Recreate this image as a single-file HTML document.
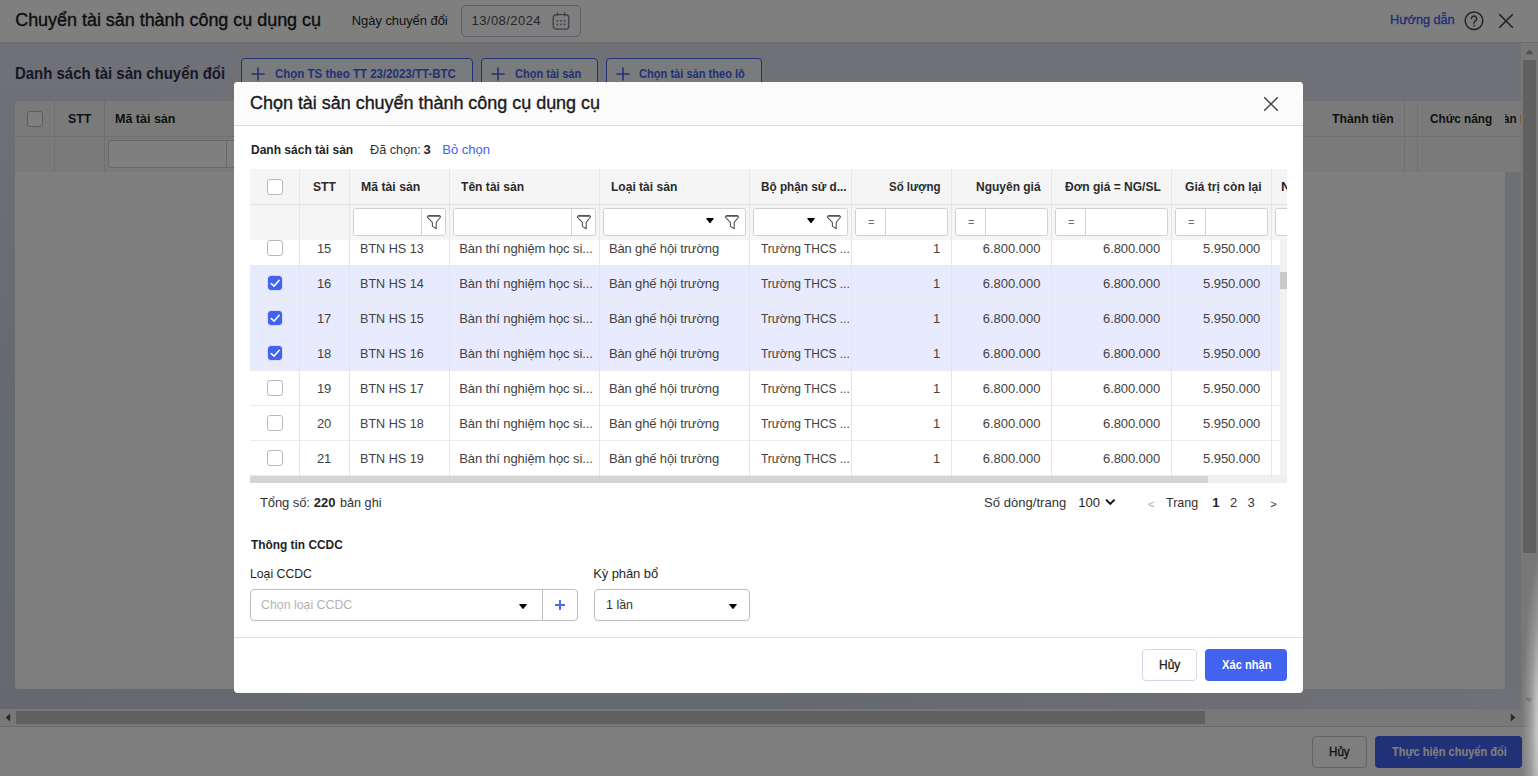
<!DOCTYPE html>
<html lang="vi">
<head>
<meta charset="utf-8">
<title>Chuyển tài sản thành công cụ dụng cụ</title>
<style>
*{box-sizing:border-box;margin:0;padding:0}
html,body{width:1538px;height:776px;overflow:hidden}
body{font-family:"Liberation Sans",sans-serif;font-size:13px;color:#1f1f1f;background:#e0e2ec radial-gradient(ellipse 1500px 700px at 0% 100%,#cad1df 0%,#ccd3e1 55%,#e0e2ec 100%);position:relative}
.L{position:absolute;left:0;top:0;width:1538px;height:776px;overflow:hidden}
.t{position:absolute;white-space:nowrap;transform-origin:0 0;line-height:20px;height:20px;font-size:13px;color:#1f1f1f}
.b{font-weight:bold}
.sk{-webkit-text-stroke:.35px currentColor}
.a{position:absolute}
.vl{position:absolute;width:1px;background:#e6e6e6}
.hl{position:absolute;height:1px;background:#e2e2e2}
.cb{position:absolute;width:16px;height:16px;border:1px solid #b9b9b9;border-radius:3px;background:#fff}
.cb.on{border:1px solid #d5d9f3;background:#4262f0;background-clip:padding-box;border-radius:3.5px}
.cb svg{position:absolute;left:-1px;top:-1px}
.fi{position:absolute;top:208px;height:28px;border:1px solid #d0d0d0;border-radius:2.5px;background:#fff}
.fi i{position:absolute;top:0;width:1px;height:26px;background:#d3d3d3}
.btn{position:absolute;height:32px;border-radius:4px}
.row{position:absolute;left:250px;width:1030px;height:35px;border-bottom:1px solid #ebebeb;background:#fff}
.row.sel{background:#e8ebfd}
svg{display:block}
</style>
</head>
<body>
<!-- ================= underlying page ================= -->
<div class="L" id="page">
  <div class="a" style="left:0;top:0;width:1538px;height:43px;background:#fff;border-bottom:1px solid #d4d4d4"></div>
  <div class="a" style="left:461px;top:5px;width:120px;height:32px;border:1px solid #bcbcc6;border-radius:5px"></div>
  <svg class="a" style="left:551px;top:12px" width="20" height="20" viewBox="0 0 20 20" fill="none" stroke="#767a9a" stroke-width="1.3"><rect x="2.2" y="2.6" width="15.6" height="14.6" rx="3.2"/><path d="M6.3 1v2.6M13.7 1v2.6" stroke-linecap="round"/><g fill="#767a9a" stroke="none"><rect x="5.6" y="8" width="1.6" height="1.6"/><rect x="9.2" y="8" width="1.6" height="1.6"/><rect x="12.8" y="8" width="1.6" height="1.6"/><rect x="5.6" y="11.6" width="1.6" height="1.6"/><rect x="9.2" y="11.6" width="1.6" height="1.6"/><rect x="12.8" y="11.6" width="1.6" height="1.6"/></g></svg>
  <svg class="a" style="left:1463px;top:10px" width="22" height="22" viewBox="0 0 22 22" fill="none" stroke="#454545" stroke-width="1.5"><circle cx="11" cy="10.8" r="8.8"/><path d="M8.4 8.6a2.6 2.6 0 1 1 3.9 2.3c-.8.5-1.3.9-1.3 1.9v.4" stroke-linecap="round"/><circle cx="11" cy="15.6" r=".9" fill="#454545" stroke="none"/></svg>
  <svg class="a" style="left:1498px;top:13px" width="16" height="16" viewBox="0 0 16 16" fill="none" stroke="#454545" stroke-width="1.6"><path d="M1.2 1.2l13.6 13.6M14.8 1.2L1.2 14.8"/></svg>

  <!-- toolbar buttons -->
  <div class="btn" style="left:241px;top:58px;width:232px;border:1px solid #4262f0;background:#f5f6f9"></div>
  <div class="btn" style="left:481px;top:58px;width:117px;border:1px solid #4262f0;background:#f5f6f9"></div>
  <div class="btn" style="left:606px;top:58px;width:156px;border:1px solid #4262f0;background:#f5f6f9"></div>
  <svg class="a" style="left:251px;top:67px" width="14" height="14" viewBox="0 0 14 14" stroke="#4262f0" stroke-width="1.6"><path d="M7 .4v13.2M.4 7h13.2"/></svg>
  <svg class="a" style="left:491px;top:67px" width="14" height="14" viewBox="0 0 14 14" stroke="#4262f0" stroke-width="1.6"><path d="M7 .4v13.2M.4 7h13.2"/></svg>
  <svg class="a" style="left:616px;top:67px" width="14" height="14" viewBox="0 0 14 14" stroke="#4262f0" stroke-width="1.6"><path d="M7 .4v13.2M.4 7h13.2"/></svg>

  <!-- grid -->
  <div class="a" style="left:15px;top:101px;width:1490px;height:588px;background:#fff;border-radius:4px"></div>
  <div class="a" style="left:15px;top:101px;width:1506px;height:71px;background:#f5f5f5;border-radius:4px 0 0 0"></div>
  <div class="a" style="left:1505px;top:172px;width:16px;height:517px;background:#dfe1ea"></div>
  <div class="hl" style="left:15px;top:136px;width:1506px;background:#e0e0e0"></div>
  <div class="vl" style="left:54px;top:101px;height:71px;background:#e0e0e0"></div>
  <div class="vl" style="left:104px;top:101px;height:71px;background:#e0e0e0"></div>
  <div class="vl" style="left:1404px;top:101px;height:71px;background:#e0e0e0"></div>
  <div class="vl" style="left:1417px;top:101px;height:71px;background:#e0e0e0"></div>
  <div class="cb" style="left:27px;top:111px"></div>
  <div class="a" style="left:108px;top:140px;width:142px;height:28px;border:1px solid #cfcfcf;border-radius:3px;background:#fff"></div>
  <div class="vl" style="left:226px;top:141px;height:26px;background:#cfcfcf"></div>
  <div class="a" style="left:1505px;top:112px;width:16px;height:20px;overflow:hidden"><span class="t b" style="left:-2px;top:-3px;transform:scaleX(.9)">àn <span style="color:#a11">lý</span></span></div>

  <!-- scrollbars -->
  <div class="a" style="left:1521px;top:43px;width:17px;height:683px;background:#f1f1f1"></div>
  <div class="a" style="left:1523px;top:60px;width:13px;height:493px;background:#c1c1c1"></div>
  <svg class="a" style="left:1525px;top:49px" width="9" height="6" viewBox="0 0 9 6"><path d="M4.5 .6L8.6 5.2H.4z" fill="#a0a0a0"/></svg>
  <svg class="a" style="left:1525px;top:697px" width="9" height="6" viewBox="0 0 9 6"><path d="M4.5 5.4L8.6 .8H.4z" fill="#a0a0a0"/></svg>
  <div class="a" style="left:0;top:709px;width:1521px;height:17px;background:#f1f1f1"></div>
  <div class="a" style="left:16px;top:711px;width:1189px;height:13px;background:#c1c1c1"></div>
  <svg class="a" style="left:5px;top:713px" width="6" height="9" viewBox="0 0 6 9"><path d="M.6 4.5L5.2 .4v8.2z" fill="#505050"/></svg>
  <svg class="a" style="left:1510px;top:713px" width="6" height="9" viewBox="0 0 6 9"><path d="M5.4 4.5L.8 .4v8.2z" fill="#505050"/></svg>

  <!-- footer -->
  <div class="a" style="left:0;top:726px;width:1538px;height:50px;background:#fff;border-top:1px solid #d6d6d6"></div>
  <div class="btn" style="left:1312px;top:736px;width:55px;border:1px solid #c8c8d0;background:#fff"></div>
  <div class="btn" style="left:1375px;top:736px;width:147px;background:#4262f0"></div>
<span class="t sk" style="left:15.20px;top:10px;font-size:18px;letter-spacing:-0.040px;color:#1a1a1a;">Chuyển tài sản thành công cụ dụng cụ</span>
<span class="t" style="left:351.80px;top:11px;letter-spacing:-0.068px;color:#1f1f1f;">Ngày chuyển đổi</span>
<span class="t" style="left:471.50px;top:11px;letter-spacing:0.441px;color:#4c4c4c;">13/08/2024</span>
<span class="t sk" style="left:1389.63px;top:10px;transform:scaleX(0.9732);color:#3f5ef0;">Hướng dẫn</span>
<span class="t b" style="left:15.27px;top:63.5px;font-size:16px;transform:scaleX(0.9342);color:#2a2f4c;">Danh sách tài sản chuyển đổi</span>
<span class="t b" style="left:275.00px;top:64px;transform:scaleX(0.8843);color:#4262f0;">Chọn TS theo TT 23/2023/TT-BTC</span>
<span class="t b" style="left:514.60px;top:64px;transform:scaleX(0.8480);color:#4262f0;">Chọn tài sản</span>
<span class="t b" style="left:639.40px;top:64px;transform:scaleX(0.8521);color:#4262f0;">Chọn tài sản theo lô</span>
<span class="t b" style="left:68.00px;top:109px;transform:scaleX(0.9426);color:#1f1f1f;">STT</span>
<span class="t b" style="left:115.30px;top:109px;transform:scaleX(0.9616);color:#1f1f1f;">Mã tài sản</span>
<span class="t b" style="left:1331.50px;top:109px;transform:scaleX(0.9395);color:#1f1f1f;">Thành tiền</span>
<span class="t b" style="left:1429.90px;top:109px;transform:scaleX(0.9054);color:#1f1f1f;">Chức năng</span>
<span class="t sk" style="left:1328.61px;top:742px;transform:scaleX(0.8931);color:#1f1f1f;">Hủy</span>
<span class="t b" style="left:1391.90px;top:742px;transform:scaleX(0.8507);color:#ffffff;">Thực hiện chuyển đổi</span>
</div>

<!-- ================= dim overlay ================= -->
<div class="L" id="ov" style="background:rgba(0,0,0,.5)"></div>

<div class="a" style="left:1510px;top:540px;width:28px;height:236px;background:radial-gradient(ellipse 24px 190px at 36px 190px,rgba(215,215,215,1) 0%,rgba(200,200,200,.9) 40%,rgba(178,178,178,.5) 68%,rgba(150,150,150,0) 100%)"></div>
<!-- ================= modal ================= -->
<div class="L" id="modal">
  <div class="a" style="left:234px;top:82px;width:1069px;height:611px;background:#fff;border-radius:4px"></div>
  <div class="a" style="left:234px;top:82px;width:1069px;height:43px;background:#fbfbfc;border-radius:4px 4px 0 0"></div>
  <div class="hl" style="left:234px;top:125px;width:1069px;background:#dcdcdc"></div>
  <svg class="a" style="left:1263px;top:96px" width="16" height="16" viewBox="0 0 16 16" fill="none" stroke="#444" stroke-width="1.45"><path d="M1.2 1.2l13.6 13.6M14.8 1.2L1.2 14.8"/></svg>

  <!-- grid header + filter -->
  <div class="a" style="left:250px;top:169px;width:1037px;height:71px;background:#f5f5f5"></div>
  <div class="hl" style="left:250px;top:204px;width:1037px;background:#e0e0e0"></div>
  <div class="cb" style="left:267px;top:179px"></div>
  <div class="a" style="left:1272px;top:177px;width:15px;height:20px;overflow:hidden"><span class="t b" style="left:9px;top:0">Ngày ghi tăng</span></div>

  <!-- filter inputs -->
  <div class="fi" style="left:353px;width:93px"><i style="left:67px"></i></div>
  <div class="fi" style="left:453px;width:143px"><i style="left:117px"></i></div>
  <div class="fi" style="left:603px;width:143px"></div>
  <div class="fi" style="left:753px;width:95px"></div>
  <div class="fi" style="left:855px;width:93px"><i style="left:29px"></i></div>
  <div class="fi" style="left:955px;width:93px"><i style="left:29px"></i></div>
  <div class="fi" style="left:1055px;width:113px"><i style="left:29px"></i></div>
  <div class="fi" style="left:1175px;width:93px"><i style="left:29px"></i></div>
  <div class="a" style="left:1275px;top:208px;width:12px;height:28px;overflow:hidden"><div class="fi" style="left:0;top:0;width:93px"></div></div>
  <svg class="a" style="left:426px;top:214px" width="16" height="16" viewBox="0 0 16 16" fill="none" stroke="#555" stroke-width="1.1" stroke-linejoin="round"><path d="M2.4 1.6H13.6L14.6 3 10.2 8.3V14.8L6.4 12.4V8.3L1.3 3.1z"/><path d="M2.4 2.3H13.8" stroke-width=".9"/></svg>
  <svg class="a" style="left:576px;top:214px" width="16" height="16" viewBox="0 0 16 16" fill="none" stroke="#555" stroke-width="1.1" stroke-linejoin="round"><path d="M2.4 1.6H13.6L14.6 3 10.2 8.3V14.8L6.4 12.4V8.3L1.3 3.1z"/><path d="M2.4 2.3H13.8" stroke-width=".9"/></svg>
  <svg class="a" style="left:724px;top:214px" width="16" height="16" viewBox="0 0 16 16" fill="none" stroke="#555" stroke-width="1.1" stroke-linejoin="round"><path d="M2.4 1.6H13.6L14.6 3 10.2 8.3V14.8L6.4 12.4V8.3L1.3 3.1z"/><path d="M2.4 2.3H13.8" stroke-width=".9"/></svg>
  <svg class="a" style="left:826px;top:214px" width="16" height="16" viewBox="0 0 16 16" fill="none" stroke="#555" stroke-width="1.1" stroke-linejoin="round"><path d="M2.4 1.6H13.6L14.6 3 10.2 8.3V14.8L6.4 12.4V8.3L1.3 3.1z"/><path d="M2.4 2.3H13.8" stroke-width=".9"/></svg>
  <svg class="a" style="left:705.7px;top:218px" width="8" height="6" viewBox="0 0 8 6"><path d="M.9 0h6.2a.6.6 0 0 1 .45 1.05L4.4 4.95a.55.55 0 0 1-.8 0L.45 1.05A.6.6 0 0 1 .9 0z" fill="#000"/></svg>
  <svg class="a" style="left:807.4px;top:218px" width="8" height="6" viewBox="0 0 8 6"><path d="M.9 0h6.2a.6.6 0 0 1 .45 1.05L4.4 4.95a.55.55 0 0 1-.8 0L.45 1.05A.6.6 0 0 1 .9 0z" fill="#000"/></svg>
  <span class="t" style="left:867.9px;top:211.5px;color:#6e6e6e;font-size:11px">=</span>
  <span class="t" style="left:967.9px;top:211.5px;color:#6e6e6e;font-size:11px">=</span>
  <span class="t" style="left:1067.9px;top:211.5px;color:#6e6e6e;font-size:11px">=</span>
  <span class="t" style="left:1187.9px;top:211.5px;color:#6e6e6e;font-size:11px">=</span>

  <!-- body rows -->
  <div class="a" style="left:250px;top:240px;width:1030px;height:236px;overflow:hidden;background:#fff">
   <div class="a" style="left:-250px;top:-240px;width:1538px;height:776px">
    <div class="row" style="top:231px"></div>
    <div class="row sel" style="top:266px"></div>
    <div class="row sel" style="top:301px"></div>
    <div class="row sel" style="top:336px"></div>
    <div class="row" style="top:371px"></div>
    <div class="row" style="top:406px"></div>
    <div class="row" style="top:441px"></div>
    <div class="cb" style="left:267px;top:240px"></div>
    <div class="cb on" style="left:267px;top:275px"><svg width="16" height="16" viewBox="0 0 16 16" fill="none" stroke="#fff" stroke-width="1.5" stroke-linecap="round" stroke-linejoin="round"><path d="M4.2 8.6l3 2.5 5-5.8"/></svg></div>
    <div class="cb on" style="left:267px;top:310px"><svg width="16" height="16" viewBox="0 0 16 16" fill="none" stroke="#fff" stroke-width="1.5" stroke-linecap="round" stroke-linejoin="round"><path d="M4.2 8.6l3 2.5 5-5.8"/></svg></div>
    <div class="cb on" style="left:267px;top:345px"><svg width="16" height="16" viewBox="0 0 16 16" fill="none" stroke="#fff" stroke-width="1.5" stroke-linecap="round" stroke-linejoin="round"><path d="M4.2 8.6l3 2.5 5-5.8"/></svg></div>
    <div class="cb" style="left:267px;top:380px"></div>
    <div class="cb" style="left:267px;top:415px"></div>
    <div class="cb" style="left:267px;top:450px"></div>
<span class="t" style="left:316.89px;top:239px;color:#424242;">15</span>
<span class="t" style="left:359.73px;top:239px;transform:scaleX(0.9688);color:#424242;">BTN HS 13</span>
<span class="t" style="left:459.20px;top:239px;letter-spacing:-0.093px;color:#424242;">Bàn thí nghiệm học si...</span>
<span class="t" style="left:608.90px;top:239px;letter-spacing:-0.141px;color:#424242;">Bàn ghế hội trường</span>
<span class="t" style="left:760.70px;top:239px;transform:scaleX(0.9179);color:#424242;">Trường THCS ...</span>
<span class="t" style="left:933.00px;top:239px;color:#424242;">1</span>
<span class="t" style="left:982.80px;top:239px;letter-spacing:-0.013px;color:#424242;">6.800.000</span>
<span class="t" style="left:1103.00px;top:239px;letter-spacing:-0.088px;color:#424242;">6.800.000</span>
<span class="t" style="left:1203.10px;top:239px;letter-spacing:-0.075px;color:#424242;">5.950.000</span>
<span class="t" style="left:316.89px;top:274px;color:#424242;">16</span>
<span class="t" style="left:359.73px;top:274px;transform:scaleX(0.9688);color:#424242;">BTN HS 14</span>
<span class="t" style="left:459.20px;top:274px;letter-spacing:-0.093px;color:#424242;">Bàn thí nghiệm học si...</span>
<span class="t" style="left:608.90px;top:274px;letter-spacing:-0.141px;color:#424242;">Bàn ghế hội trường</span>
<span class="t" style="left:760.70px;top:274px;transform:scaleX(0.9179);color:#424242;">Trường THCS ...</span>
<span class="t" style="left:933.00px;top:274px;color:#424242;">1</span>
<span class="t" style="left:982.80px;top:274px;letter-spacing:-0.013px;color:#424242;">6.800.000</span>
<span class="t" style="left:1103.00px;top:274px;letter-spacing:-0.088px;color:#424242;">6.800.000</span>
<span class="t" style="left:1203.10px;top:274px;letter-spacing:-0.075px;color:#424242;">5.950.000</span>
<span class="t" style="left:316.89px;top:309px;color:#424242;">17</span>
<span class="t" style="left:359.73px;top:309px;transform:scaleX(0.9688);color:#424242;">BTN HS 15</span>
<span class="t" style="left:459.20px;top:309px;letter-spacing:-0.093px;color:#424242;">Bàn thí nghiệm học si...</span>
<span class="t" style="left:608.90px;top:309px;letter-spacing:-0.141px;color:#424242;">Bàn ghế hội trường</span>
<span class="t" style="left:760.70px;top:309px;transform:scaleX(0.9179);color:#424242;">Trường THCS ...</span>
<span class="t" style="left:933.00px;top:309px;color:#424242;">1</span>
<span class="t" style="left:982.80px;top:309px;letter-spacing:-0.013px;color:#424242;">6.800.000</span>
<span class="t" style="left:1103.00px;top:309px;letter-spacing:-0.088px;color:#424242;">6.800.000</span>
<span class="t" style="left:1203.10px;top:309px;letter-spacing:-0.075px;color:#424242;">5.950.000</span>
<span class="t" style="left:316.89px;top:344px;color:#424242;">18</span>
<span class="t" style="left:359.73px;top:344px;transform:scaleX(0.9688);color:#424242;">BTN HS 16</span>
<span class="t" style="left:459.20px;top:344px;letter-spacing:-0.093px;color:#424242;">Bàn thí nghiệm học si...</span>
<span class="t" style="left:608.90px;top:344px;letter-spacing:-0.141px;color:#424242;">Bàn ghế hội trường</span>
<span class="t" style="left:760.70px;top:344px;transform:scaleX(0.9179);color:#424242;">Trường THCS ...</span>
<span class="t" style="left:933.00px;top:344px;color:#424242;">1</span>
<span class="t" style="left:982.80px;top:344px;letter-spacing:-0.013px;color:#424242;">6.800.000</span>
<span class="t" style="left:1103.00px;top:344px;letter-spacing:-0.088px;color:#424242;">6.800.000</span>
<span class="t" style="left:1203.10px;top:344px;letter-spacing:-0.075px;color:#424242;">5.950.000</span>
<span class="t" style="left:316.89px;top:379px;color:#424242;">19</span>
<span class="t" style="left:359.73px;top:379px;transform:scaleX(0.9688);color:#424242;">BTN HS 17</span>
<span class="t" style="left:459.20px;top:379px;letter-spacing:-0.093px;color:#424242;">Bàn thí nghiệm học si...</span>
<span class="t" style="left:608.90px;top:379px;letter-spacing:-0.141px;color:#424242;">Bàn ghế hội trường</span>
<span class="t" style="left:760.70px;top:379px;transform:scaleX(0.9179);color:#424242;">Trường THCS ...</span>
<span class="t" style="left:933.00px;top:379px;color:#424242;">1</span>
<span class="t" style="left:982.80px;top:379px;letter-spacing:-0.013px;color:#424242;">6.800.000</span>
<span class="t" style="left:1103.00px;top:379px;letter-spacing:-0.088px;color:#424242;">6.800.000</span>
<span class="t" style="left:1203.10px;top:379px;letter-spacing:-0.075px;color:#424242;">5.950.000</span>
<span class="t" style="left:316.89px;top:414px;color:#424242;">20</span>
<span class="t" style="left:359.73px;top:414px;transform:scaleX(0.9688);color:#424242;">BTN HS 18</span>
<span class="t" style="left:459.20px;top:414px;letter-spacing:-0.093px;color:#424242;">Bàn thí nghiệm học si...</span>
<span class="t" style="left:608.90px;top:414px;letter-spacing:-0.141px;color:#424242;">Bàn ghế hội trường</span>
<span class="t" style="left:760.70px;top:414px;transform:scaleX(0.9179);color:#424242;">Trường THCS ...</span>
<span class="t" style="left:933.00px;top:414px;color:#424242;">1</span>
<span class="t" style="left:982.80px;top:414px;letter-spacing:-0.013px;color:#424242;">6.800.000</span>
<span class="t" style="left:1103.00px;top:414px;letter-spacing:-0.088px;color:#424242;">6.800.000</span>
<span class="t" style="left:1203.10px;top:414px;letter-spacing:-0.075px;color:#424242;">5.950.000</span>
<span class="t" style="left:316.89px;top:449px;color:#424242;">21</span>
<span class="t" style="left:359.73px;top:449px;transform:scaleX(0.9688);color:#424242;">BTN HS 19</span>
<span class="t" style="left:459.20px;top:449px;letter-spacing:-0.093px;color:#424242;">Bàn thí nghiệm học si...</span>
<span class="t" style="left:608.90px;top:449px;letter-spacing:-0.141px;color:#424242;">Bàn ghế hội trường</span>
<span class="t" style="left:760.70px;top:449px;transform:scaleX(0.9179);color:#424242;">Trường THCS ...</span>
<span class="t" style="left:933.00px;top:449px;color:#424242;">1</span>
<span class="t" style="left:982.80px;top:449px;letter-spacing:-0.013px;color:#424242;">6.800.000</span>
<span class="t" style="left:1103.00px;top:449px;letter-spacing:-0.088px;color:#424242;">6.800.000</span>
<span class="t" style="left:1203.10px;top:449px;letter-spacing:-0.075px;color:#424242;">5.950.000</span>
   </div>
  </div>
  <!-- column dividers -->
  <div class="vl" style="left:299px;top:169px;height:307px"></div>
  <div class="vl" style="left:349px;top:169px;height:307px"></div>
  <div class="vl" style="left:449px;top:169px;height:307px"></div>
  <div class="vl" style="left:599px;top:169px;height:307px"></div>
  <div class="vl" style="left:749px;top:169px;height:307px"></div>
  <div class="vl" style="left:851px;top:169px;height:307px"></div>
  <div class="vl" style="left:951px;top:169px;height:307px"></div>
  <div class="vl" style="left:1051px;top:169px;height:307px"></div>
  <div class="vl" style="left:1171px;top:169px;height:307px"></div>
  <div class="vl" style="left:1271px;top:169px;height:307px"></div>
  <!-- grid scrollbars -->
  <div class="a" style="left:1280px;top:240px;width:7px;height:236px;background:#f1f1f1"></div>
  <div class="a" style="left:1280px;top:272px;width:7px;height:17px;background:#c8c8c8"></div>
  <div class="a" style="left:250px;top:476px;width:1037px;height:7px;background:#efefef"></div>
  <div class="a" style="left:250px;top:476px;width:958px;height:7px;background:#d5d5d5"></div>

  <!-- paging chevron -->
  <svg class="a" style="left:1105px;top:498px" width="11" height="8" viewBox="0 0 11 8" fill="none" stroke="#111" stroke-width="2"><path d="M1 1.6L5.3 5.9 9.6 1.6"/></svg>

  <!-- CCDC form -->
  <div class="a" style="left:250px;top:589px;width:328px;height:32px;border:1px solid #bdbdbd;border-radius:4px;background:#fff"></div>
  <div class="vl" style="left:542px;top:590px;height:30px;background:#bdbdbd"></div>
  <svg class="a" style="left:518.7px;top:604px" width="8" height="5" viewBox="0 0 8 5"><path d="M.9 0h6.2a.6.6 0 0 1 .45 1.05L4.4 4.75a.55.55 0 0 1-.8 0L.45 1.05A.6.6 0 0 1 .9 0z" fill="#000"/></svg>
  <svg class="a" style="left:555px;top:600px" width="10" height="10" viewBox="0 0 10 10" stroke="#4a68f2" stroke-width="1.9"><path d="M5 0v10M0 5h10"/></svg>
  <div class="a" style="left:594px;top:589px;width:156px;height:32px;border:1px solid #bdbdbd;border-radius:4px;background:#fff"></div>
  <svg class="a" style="left:728.7px;top:604px" width="8" height="5" viewBox="0 0 8 5"><path d="M.9 0h6.2a.6.6 0 0 1 .45 1.05L4.4 4.75a.55.55 0 0 1-.8 0L.45 1.05A.6.6 0 0 1 .9 0z" fill="#000"/></svg>

  <!-- modal footer -->
  <div class="hl" style="left:234px;top:637px;width:1069px;background:#d9ddea"></div>
  <div class="btn" style="left:1142px;top:649px;width:55px;border:1px solid #d3d7e6;background:#fff"></div>
  <div class="btn" style="left:1205px;top:649px;width:82px;background:#4262f0"></div>
<span class="t sk" style="left:250.00px;top:93px;font-size:18px;letter-spacing:-0.031px;color:#1a1a1a;">Chọn tài sản chuyển thành công cụ dụng cụ</span>
<span class="t b" style="left:250.70px;top:140px;transform:scaleX(0.9241);color:#1f1f1f;">Danh sách tài sản</span>
<span class="t" style="left:370.10px;top:140px;transform:scaleX(0.9763);color:#333;">Đã chọn:</span>
<span class="t b" style="left:423.60px;top:140px;color:#1f1f1f;">3</span>
<span class="t" style="left:442.20px;top:140px;letter-spacing:0.021px;color:#4262f0;">Bỏ chọn</span>
<span class="t b" style="left:313.10px;top:177px;transform:scaleX(0.9304);color:#2b2b2b;">STT</span>
<span class="t b" style="left:360.70px;top:177px;transform:scaleX(0.9426);color:#2b2b2b;">Mã tài sản</span>
<span class="t b" style="left:460.90px;top:177px;transform:scaleX(0.9299);color:#2b2b2b;">Tên tài sản</span>
<span class="t b" style="left:610.60px;top:177px;transform:scaleX(0.9263);color:#2b2b2b;">Loại tài sản</span>
<span class="t b" style="left:760.70px;top:177px;transform:scaleX(0.9040);color:#2b2b2b;">Bộ phận sử d...</span>
<span class="t b" style="left:889.30px;top:177px;transform:scaleX(0.8831);color:#2b2b2b;">Số lượng</span>
<span class="t b" style="left:975.70px;top:177px;transform:scaleX(0.9219);color:#2b2b2b;">Nguyên giá</span>
<span class="t b" style="left:1064.70px;top:177px;transform:scaleX(0.9260);color:#2b2b2b;">Đơn giá = NG/SL</span>
<span class="t b" style="left:1184.80px;top:177px;transform:scaleX(0.9297);color:#2b2b2b;">Giá trị còn lại</span>
<span class="t" style="left:259.90px;top:493px;letter-spacing:-0.082px;color:#333;">Tổng số:</span>
<span class="t b" style="left:313.77px;top:493px;color:#1f1f1f;">220</span>
<span class="t" style="left:339.90px;top:493px;transform:scaleX(0.9728);color:#333;">bản ghi</span>
<span class="t" style="left:984.10px;top:493px;letter-spacing:0.038px;color:#333;">Số dòng/trang</span>
<span class="t" style="left:1078.22px;top:493px;color:#1f1f1f;">100</span>
<span class="t" style="left:1148.05px;top:493.5px;font-size:11px;color:#a8a8a8;">&lt;</span>
<span class="t" style="left:1166.10px;top:493px;transform:scaleX(0.9625);color:#333;">Trang</span>
<span class="t b" style="left:1212.35px;top:493px;color:#1f1f1f;">1</span>
<span class="t" style="left:1230.10px;top:493px;color:#333;">2</span>
<span class="t" style="left:1247.60px;top:493px;color:#333;">3</span>
<span class="t" style="left:1270.20px;top:493.5px;font-size:11px;color:#333;">&gt;</span>
<span class="t b" style="left:250.70px;top:535px;transform:scaleX(0.9141);color:#1f1f1f;">Thông tin CCDC</span>
<span class="t" style="left:249.76px;top:564px;transform:scaleX(0.9417);color:#1f1f1f;">Loại CCDC</span>
<span class="t" style="left:593.20px;top:564px;letter-spacing:-0.094px;color:#1f1f1f;">Kỳ phân bổ</span>
<span class="t" style="left:261.30px;top:595px;transform:scaleX(0.9498);color:#b3b3b3;">Chọn loại CCDC</span>
<span class="t" style="left:605.80px;top:595px;transform:scaleX(0.9585);color:#333;">1 lần</span>
<span class="t sk" style="left:1158.58px;top:655px;transform:scaleX(0.9196);color:#1f1f1f;">Hủy</span>
<span class="t b" style="left:1221.90px;top:655px;transform:scaleX(0.8573);color:#ffffff;">Xác nhận</span>
</div>
</body>
</html>
